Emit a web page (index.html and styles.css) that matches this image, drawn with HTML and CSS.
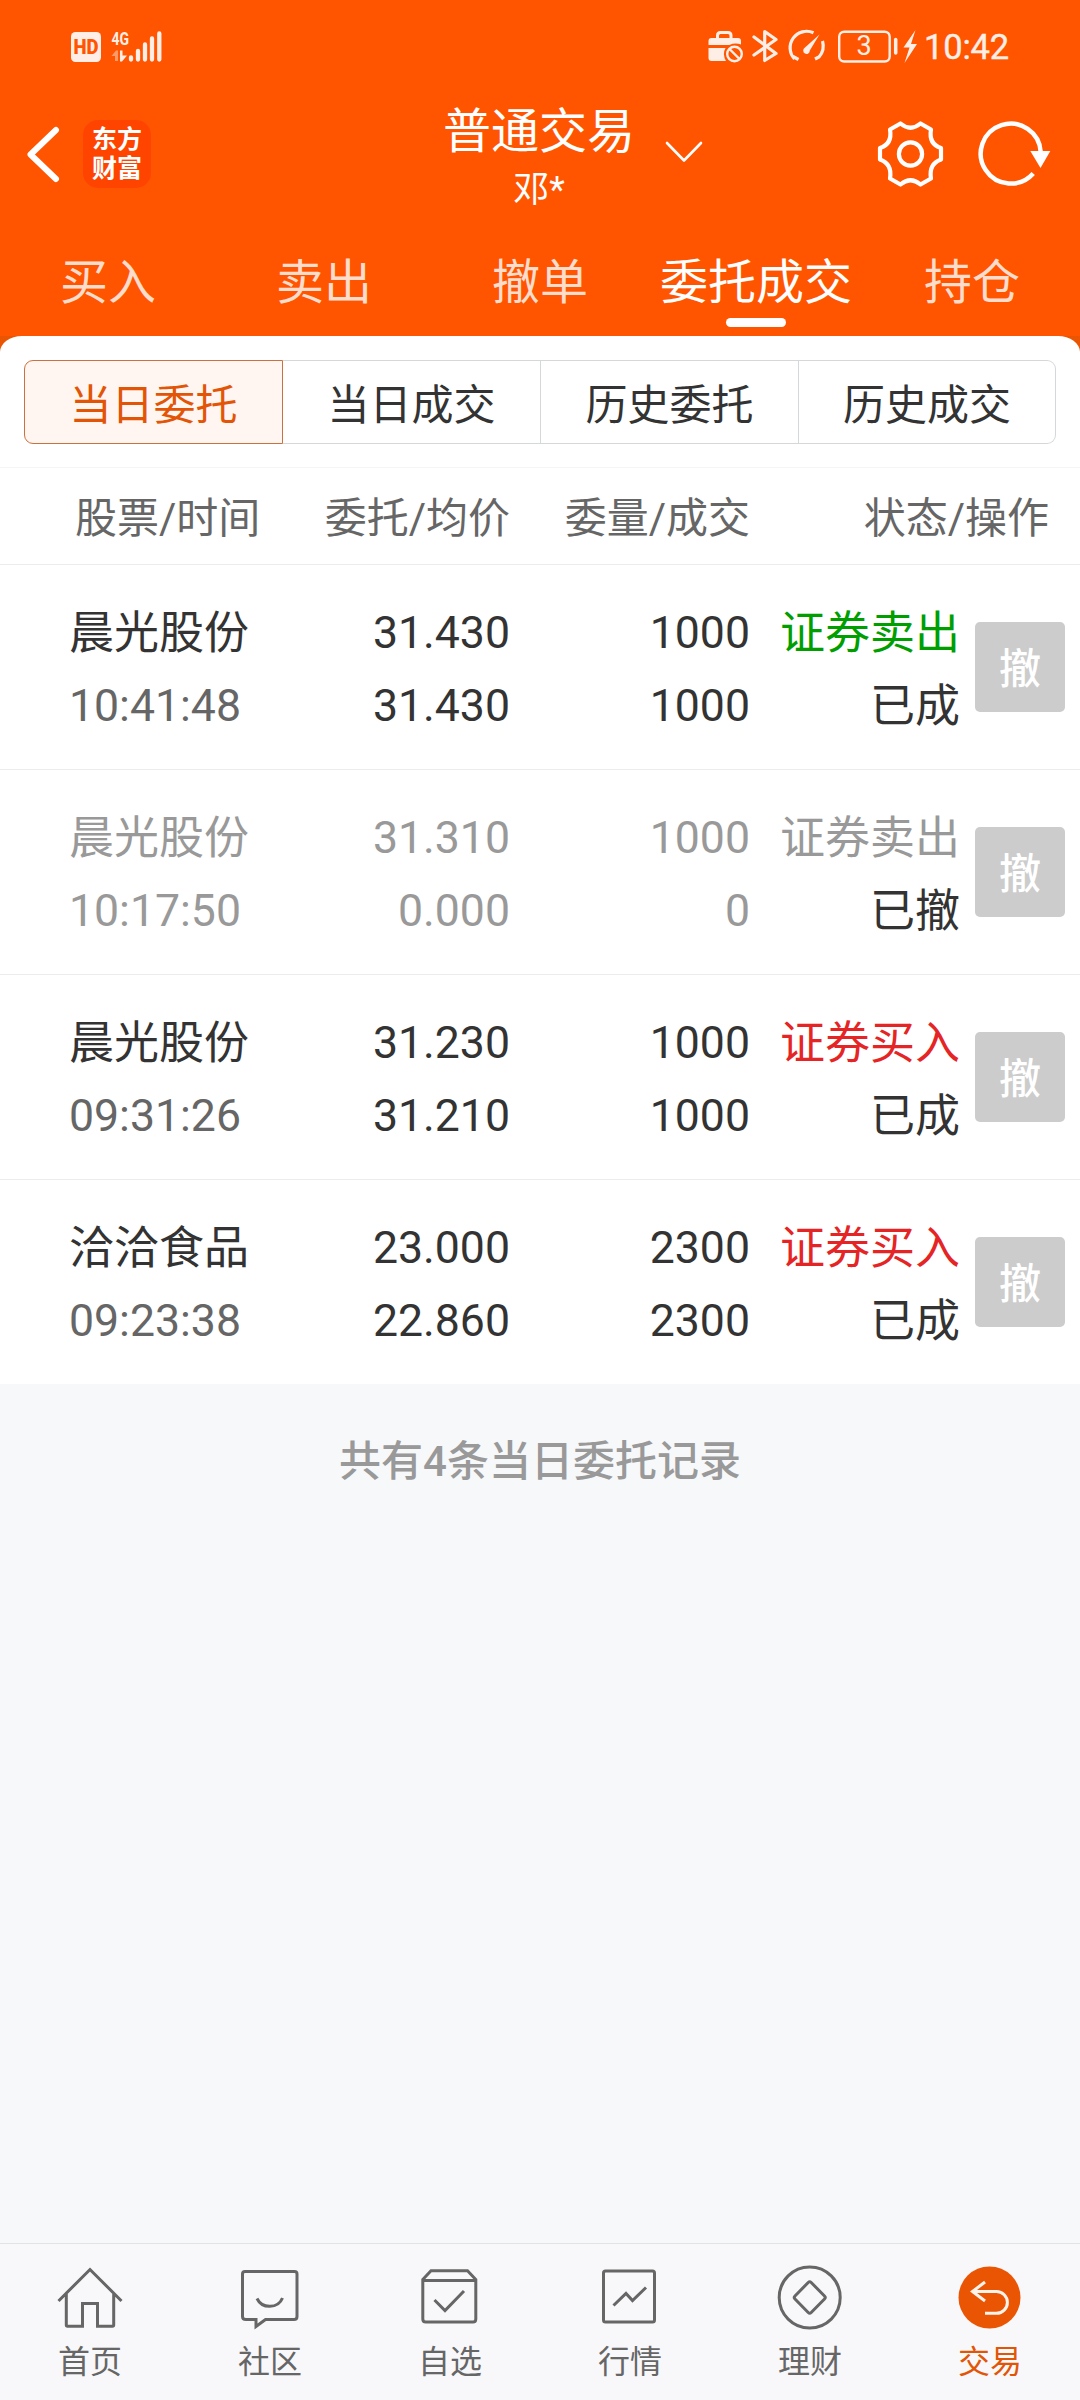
FILE: index.html
```html
<!DOCTYPE html>
<html lang="zh-CN">
<head>
<meta charset="utf-8">
<title>普通交易</title>
<link rel="stylesheet" href="styles.css">
</head>
<body>
<div class="app">
  <header class="top">
    <div class="status">
      <svg class="status-left" width="100" height="40" viewBox="66 26 100 40">
        <rect x="71" y="32" width="30" height="30" rx="4.5" fill="#ffeee6"/>
        <text x="86" y="54" text-anchor="middle" textLength="25" lengthAdjust="spacingAndGlyphs" class="hd">HD</text>
        <text x="111.5" y="44.5" textLength="17.5" lengthAdjust="spacingAndGlyphs" class="net">4G</text>
        <path d="M111.500 56L116 50.500H118V61H115V56Z" fill="#ff9a66"/>
        <path d="M120 50.500H122.500V55.500H127L122 61.500H120Z" fill="#ffeee6"/>
        <g stroke="#ffeee6" stroke-width="4.300" stroke-linecap="round"><path d="M131 57.500V59.500M138 51V59.500M145 44.500V59.500M152 38.500V59.500M159.300 33.500V59.500"/></g>
      </svg>
      <div class="status-right">
        <svg width="214" height="40" viewBox="706 26 214 40" fill="none" stroke="#ffeee6">
          <path d="M717.500 38V35.500Q717.500 32.500 720.500 32.500H728Q731 32.500 731 35.500V38" stroke-width="3"/>
          <path d="M708.500 45V41Q708.500 38 711.500 38H738Q741 38 741 41V44.500Q735 42.500 729.500 45Z" fill="#ffeee6" stroke="none"/>
          <path d="M708.500 48H725.500Q722 54 726 61H711.500Q708.500 61 708.500 58Z" fill="#ffeee6" stroke="none"/>
          <circle cx="734.500" cy="54" r="7.300" stroke-width="2.400"/><path d="M729.500 49L739.500 59" stroke-width="2.400"/>
          <path d="M754 37L776 53.500L764.700 60.500V31.500L776 39.500L754 55" stroke-width="3.200" stroke-linejoin="round" stroke-linecap="round"/>
          <path d="M813.500 32.800A16.500 16.500 0 0 0 794.500 59M793 56.500L798.500 59.500M822.500 41A17 17 0 0 1 819 57L815 59" stroke-width="3.200"/>
          <path d="M819.500 34.500L809.800 50.500A3.300 3.300 0 1 1 804.700 47.800Z" fill="#ffeee6" stroke="none"/>
          <rect x="839.200" y="31.700" width="50.500" height="29.800" rx="5" stroke-width="2.400"/>
          <path d="M895.700 39.500V53" stroke-width="3.500" stroke-linecap="round"/>
          <path d="M915.500 30L903.500 47.500H909.500L904.500 63L917 44H911Z" fill="#ffeee6" stroke="none"/>
          <text x="864" y="55.200" text-anchor="middle" class="battery">3</text>
        </svg>
        <span class="clock">10:42</span>
      </div>
    </div>
    <div class="bar">
      <div class="bar-left">
        <svg width="36" height="60" viewBox="24 124 36 60" fill="none" stroke="#fff" stroke-width="6" stroke-linecap="round" stroke-linejoin="round"><path d="M56 130L30.500 154.500L56 179"/></svg>
        <div class="logo"><span>东方</span><span>财富</span></div>
      </div>
      <div class="account">
        <h1>普通交易</h1>
        <p>邓*</p>
      </div>
      <div class="bar-right">
        <svg class="chev" width="40" height="24" viewBox="0 0 40 24" fill="none" stroke="#fff" stroke-width="2.600" stroke-linecap="round" stroke-linejoin="round"><path d="M3 3L20 20.500L37 3"/></svg>
        <svg class="gear" width="68" height="68" viewBox="0 0 68 68" fill="none" stroke="#fff" stroke-width="4.200" stroke-linejoin="round">
          <path d="M23.500 3.500Q33.500 12 43.500 3.500L54 9.500Q51.500 24 64 28V39.500Q51.500 44 54 58.500L43.500 64.500Q33.500 56 23.500 64.500L13 58.500Q15.500 44 3 39.500V28Q15.500 24 13 9.500Z"/>
          <circle cx="33.500" cy="34" r="11.600"/>
        </svg>
        <svg width="76" height="68" viewBox="976 120 76 68"><path d="M1033.200 173.500A30 30 0 1 1 1040.700 152" fill="none" stroke="#fff" stroke-width="4.500"/><path d="M1030.300 151H1050.300L1040.500 168Z" fill="#fff"/></svg>
      </div>
    </div>
    <nav class="tabs">
      <a>买入</a><a>卖出</a><a>撤单</a><a class="on">委托成交</a><a>持仓</a>
    </nav>
  </header>

  <main class="sheet">
    <div class="panel">
      <div class="segments">
        <div class="seg on">当日委托</div><div class="seg">当日成交</div><div class="seg">历史委托</div><div class="seg">历史成交</div>
      </div>
    </div>
    <div class="cols head"><span>股票/时间</span><span>委托/均价</span><span>委量/成交</span><span>状态/操作</span></div>

    <div class="cols row">
      <div><p>晨光股份</p><p class="time">10:41:48</p></div>
      <div class="num"><p>31.430</p><p>31.430</p></div>
      <div class="num"><p>1000</p><p>1000</p></div>
      <div><p class="sell">证券卖出</p><p>已成</p></div>
      <button>撤</button>
    </div>
    <div class="cols row void">
      <div><p>晨光股份</p><p class="time">10:17:50</p></div>
      <div class="num"><p>31.310</p><p>0.000</p></div>
      <div class="num"><p>1000</p><p>0</p></div>
      <div><p>证券卖出</p><p class="state">已撤</p></div>
      <button>撤</button>
    </div>
    <div class="cols row">
      <div><p>晨光股份</p><p class="time">09:31:26</p></div>
      <div class="num"><p>31.230</p><p>31.210</p></div>
      <div class="num"><p>1000</p><p>1000</p></div>
      <div><p class="buy">证券买入</p><p>已成</p></div>
      <button>撤</button>
    </div>
    <div class="cols row">
      <div><p>洽洽食品</p><p class="time">09:23:38</p></div>
      <div class="num"><p>23.000</p><p>22.860</p></div>
      <div class="num"><p>2300</p><p>2300</p></div>
      <div><p class="buy">证券买入</p><p>已成</p></div>
      <button>撤</button>
    </div>
  </main>
  <p class="note">共有4条当日委托记录</p>

  <footer class="nav">
    <a><svg viewBox="0 0 72 72"><path d="M4.500 42L36 10.500L67.500 42M12.300 35V66Q12.300 67.200 13.500 67.200H28.500V44.500H43.500V67.200H58.500Q59.700 67.200 59.700 66V35"/></svg>首页</a>
    <a><svg viewBox="0 0 72 72"><path d="M11 12.500H60.500Q63 12.500 63 15V57.500Q63 60.500 60 60.500H31.500L22 67.500V60.500H12Q8.500 60.500 8.500 57.500V15Q8.500 12.500 11 12.500ZM23 39.500C28 50 44 50 48.500 39"/></svg>社区</a>
    <a><svg viewBox="0 0 72 72"><path d="M8.800 20.500L17 11.800H53.500L61.800 20.500V60Q61.800 63 59 63H11.800Q8.800 63 8.800 60ZM8.800 21.500H61.800M20.500 41L31 51.500L50 32"/></svg>自选</a>
    <a><svg viewBox="0 0 72 72"><rect x="9.500" y="12" width="51" height="51" rx="2"/><path d="M19.500 46.500L32 34.500L38.500 41.500L52 28.500"/></svg>行情</a>
    <a><svg viewBox="0 0 72 72"><circle cx="35.700" cy="38.500" r="30.500"/><path d="M34.200 23.500Q35.700 22 37.200 23.500L50.500 37Q52 38.500 50.500 40L37.200 53.500Q35.700 55 34.200 53.500L21 40Q19.500 38.500 21 37Z"/></svg>理财</a>
    <a class="on"><svg viewBox="0 0 72 72"><circle cx="35.500" cy="38.500" r="31" class="disc"/><path class="arrow" d="M31 23L18.500 32.500L31 42M18.500 32.500H42.500A10.900 10.900 0 0 1 42.500 54.300H31"/></svg>交易</a>
  </footer>
</div>
</body>
</html>
```
FILE: styles.css
```css
* { box-sizing: border-box; margin: 0; padding: 0; }
body {
  font-family: Roboto, "Noto Sans CJK SC", sans-serif;
  color: #333;
  background: #f7f8fa;
}
svg { display: block; }
.app { width: 1080px; height: 2400px; display: flex; flex-direction: column; }

/* header */
.top { background: #ff5500; height: 336px; color: #fff; flex: none; }
.status {
  height: 92px; display: flex; justify-content: space-between;
  padding: 26px 72px 0 66px; color: #ffeee6;
}
.status-right { display: flex; gap: 4px; }
.clock {
  font-size: 34.500px; line-height: 43px; font-weight: 400; width: 84px;
  letter-spacing: -0.2px; -webkit-text-stroke: 0.4px currentColor;
}
.hd { font: 900 20px Roboto, sans-serif; fill: #ff5500; stroke: none; }
.net { font: 700 18px Roboto, sans-serif; fill: #ffeee6; }
.battery { font: 400 27px Roboto, sans-serif; fill: #ffeee6; stroke: none; }

.bar {
  height: 124px; display: grid; grid-template-columns: 443px 192px 1fr;
}
.bar-left { display: flex; padding: 28px 0 0 24px; gap: 23px; }
.bar-left svg { margin-top: 4px; }
.logo {
  width: 68px; height: 68px; border-radius: 15px; background: #ff4400;
  display: flex; flex-direction: column; align-items: center; padding-top: 5px;
  font-size: 25px; line-height: 29px; font-weight: 700;
}
.account { text-align: center; }
.account h1 { font-size: 48px; font-weight: 400; line-height: 60px; margin-top: 10px; }
.account p { font-size: 36px; line-height: 44px; margin-top: 6px; }
.bar-right { display: flex; padding-top: 28px; }
.chev { margin: 20px 0 0 29px; }
.gear { margin: 0 31px 0 173px; }

.tabs { display: grid; grid-template-columns: repeat(5, 216px); height: 120px; }
.tabs a {
  font-size: 48px; line-height: 60px; padding-top: 37px; color: #ffdccb;
  display: flex; flex-direction: column; align-items: center; white-space: nowrap;
}
.tabs .on { color: #fff; }
.tabs .on::after { content: ""; width: 60px; height: 9px; border-radius: 5px; background: #fff; margin-top: 5px; }

/* order list */
.sheet { background: linear-gradient(#ea5504 16px, #fff 16px); }
.panel {
  height: 132px; background: #fff; border-radius: 22px 22px 0 0 / 16px 16px 0 0;
  padding: 24px 24px 0; border-bottom: 1px solid #f5f5f5;
}
.segments { display: grid; grid-template-columns: 259px 258px 258px 257px; height: 84px; }
.seg {
  border: 1px solid #d5d8d9; border-left-width: 0;
  display: flex; align-items: center; justify-content: center;
  font-size: 42px; padding-bottom: 2px;
}
.seg.on { border: 1px solid #cb7140; border-radius: 9px 0 0 9px; background: #fff5f1; color: #e25507; }
.seg:last-child { border-radius: 0 9px 9px 0; }

.cols {
  display: grid; grid-template-columns: 260px 181px 240px 210px 105px;
  padding-left: 69px; background: #fff; text-align: right;
  border-bottom: 1px solid #ececec; white-space: nowrap;
}
.cols > :first-child { text-align: left; }
.head {
  height: 97px; font-size: 42px; line-height: 98px; color: #666; padding-top: 2px;
  grid-template-columns: 235px 200px 240px 299px; padding-left: 75px;
}
.row { height: 205px; padding-top: 32px; font-size: 45px; line-height: 73px; }
.row:last-child { border-bottom: 0; height: 204px; }
.row .num, .row .time { font-size: 44.600px; }
.time { color: #666; }
.row.void, .void .time { color: #999; }
.row .state { color: #333; }
.sell { color: #009e00; }
.buy { color: #e52525; }
.row button {
  width: 90px; height: 90px; margin: 25px 0 0 15px; padding-bottom: 3px; border: 0; border-radius: 5px;
  background: #ccc; color: #fff; font: 500 42px Roboto, "Noto Sans CJK SC", sans-serif;
}
.note { text-align: center; font-size: 42px; line-height: 60px; font-weight: 500; color: #999; margin-top: 48px; }

/* bottom navigation */
.nav {
  margin-top: auto; height: 157px; border-top: 1px solid #e3e3e5; background: #f8f8fa;
  display: grid; grid-template-columns: repeat(6, 180px);
}
.nav a {
  display: flex; flex-direction: column; align-items: center;
  padding-top: 15px; font-size: 32px; line-height: 40px; color: #666;
}
.nav svg { width: 72px; height: 72px; margin-bottom: 11px; fill: none; stroke: #666; stroke-width: 3; }
.nav .on { color: #e25507; }
.nav .disc { fill: #ea5504; stroke: none; }
.nav .arrow { stroke: #fff3ec; }
```
